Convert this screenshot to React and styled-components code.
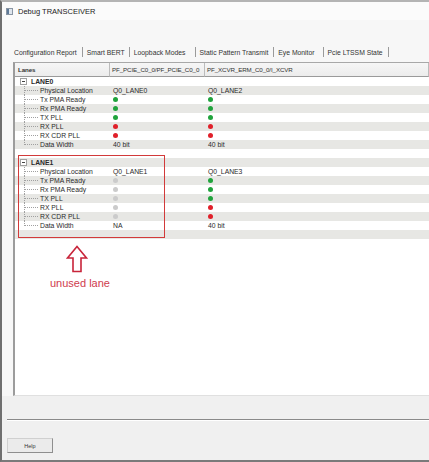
import React from 'react'
import styled, { createGlobalStyle } from 'styled-components'

const GlobalStyle = createGlobalStyle`
  html, body {
    margin: 0;
    padding: 0;
    background: #ffffff;
  }
  body {
    font-family: 'Liberation Sans', Arial, sans-serif;
    color: #222;
  }
`

const Window = styled.div`
  width: 429px;
  height: 462px;
  box-sizing: border-box;
  border-left: 2px solid #6f6f6f;
  border-bottom: 2px solid #7a7a7a;
  border-top: 2px solid #b4b4b4;
  background: #f2f2f2;
  display: flex;
  flex-direction: column;
  overflow: hidden;
`

const TitleBar = styled.div`
  height: 18px;
  flex: none;
  display: flex;
  align-items: center;
  gap: 5px;
  padding-left: 4px;
  background: #fbfbfb;
  font-size: 7.5px;
  color: #222;
`

const Body = styled.div`
  flex: 1;
  display: flex;
  flex-direction: column;
  padding: 26px 0 0 11px;
  background: #f7f7f7;
`

const TabStrip = styled.div`
  height: 12px;
  display: flex;
  align-items: center;
  padding-left: 1px;
  font-size: 6.8px;
  color: #333;
`

const TabItem = styled.span`
  padding: 0 ${({ $pad }) => $pad}px 0 ${({ $first }) => ($first ? 0 : 4)}px;
  white-space: nowrap;
`

const TabSep = styled.span`
  width: 1px;
  height: 10px;
  background: #9a9a9a;
  flex: none;
`

const Panel = styled.div`
  position: relative;
  margin-top: 4px;
  flex: 1;
  background: #ffffff;
  border-top: 1px solid #a8a8a8;
  border-left: 2px solid #9c9c9c;
  border-bottom: 1px solid #e0e0e0;
`

const Grid = styled.div`
  display: grid;
  grid-template-columns: 95px 95px 1fr;
  font-size: 6.8px;
`

const HeadCell = styled.div`
  height: 14px;
  box-sizing: border-box;
  display: flex;
  align-items: center;
  padding-left: ${({ $pad }) => $pad}px;
  background: linear-gradient(#f6f6f6, #ececec);
  border-bottom: 1px solid #9a9a9a;
  border-right: 1px solid #bcbcbc;
  font-size: 6.2px;
  letter-spacing: -0.1px;
  font-weight: ${({ $bold }) => ($bold ? 700 : 400)};
  color: #333;
  white-space: nowrap;
  overflow: hidden;
`

const Cell = styled.div`
  position: relative;
  height: 9px;
  display: flex;
  align-items: center;
  padding-left: ${({ $pad }) => $pad}px;
  background: ${({ $stripe }) => ($stripe ? '#e7e7e4' : '#ffffff')};
  font-weight: ${({ $bold }) => ($bold ? 700 : 400)};
  color: #2a2a2a;
  white-space: nowrap;
`

const TreeLine = styled.span`
  position: absolute;
  left: 9px;
  top: 0;
  width: 10px;
  height: ${({ $last }) => ($last ? 5 : 9)}px;
  border-left: 1px dotted #a0a0a0;
  &::after {
    content: '';
    position: absolute;
    left: 0;
    top: 4px;
    width: 13px;
    border-top: 1px dotted #a0a0a0;
  }
`

const Toggle = styled.span`
  width: 5px;
  height: 5px;
  border: 1px solid #a0a0a0;
  background: #fff;
  margin-right: 4px;
  position: relative;
  flex: none;
  &::after {
    content: '';
    position: absolute;
    left: 1px;
    top: 2px;
    width: 3px;
    height: 1px;
    background: #444;
  }
`

const Dot = styled.span`
  width: 5px;
  height: 5px;
  border-radius: 50%;
  background: ${({ $c }) => $c};
`

const Mark = styled.div`
  position: absolute;
  left: 3px;
  top: 92px;
  width: 147px;
  height: 83px;
  box-sizing: border-box;
  border: 1.5px solid #d23a3a;
`

const Arrow = styled.svg`
  position: absolute;
  left: 51px;
  top: 182px;
`

const Note = styled.div`
  position: absolute;
  left: 35px;
  top: 214px;
  font-size: 11px;
  color: #cf3b4d;
`

const Footer = styled.div`
  height: 64px;
  flex: none;
  display: flex;
  flex-direction: column;
  background: #f0f0f0;
`

const Rule = styled.div`
  margin-top: 23px;
  margin-left: 5px;
  height: 1px;
  background: #8a8a8a;
  border-bottom: 1px solid #ffffff;
`

const HelpButton = styled.button`
  margin: 17px 0 0 5px;
  width: 46px;
  height: 15px;
  padding: 0;
  font-family: 'Liberation Sans', Arial, sans-serif;
  font-size: 5.5px;
  color: #333;
  background: #ebebeb;
  border: 1px solid #d0d0d0;
  border-right-color: #8f8f8f;
  border-bottom-color: #8f8f8f;
`

const GREEN = '#20a33c'
const RED = '#e0202a'
const GRAY = '#cbcbcb'

const lanes = [
  {
    name: 'LANE0',
    rows: [
      ['Physical Location', 'Q0_LANE0', 'Q0_LANE2'],
      ['Tx PMA Ready', GREEN, GREEN],
      ['Rx PMA Ready', GREEN, GREEN],
      ['TX PLL', GREEN, GREEN],
      ['RX PLL', RED, RED],
      ['RX CDR PLL', RED, RED],
      ['Data Width', '40 bit', '40 bit'],
    ],
  },
  {
    name: 'LANE1',
    rows: [
      ['Physical Location', 'Q0_LANE1', 'Q0_LANE3'],
      ['Tx PMA Ready', GRAY, GREEN],
      ['Rx PMA Ready', GRAY, GREEN],
      ['TX PLL', GRAY, GREEN],
      ['RX PLL', GRAY, RED],
      ['RX CDR PLL', GRAY, RED],
      ['Data Width', 'NA', '40 bit'],
    ],
  },
]

const tabs = [
  ['Configuration Report', 5],
  ['Smart BERT', 4],
  ['Loopback Modes', 9],
  ['Static Pattern Transmit', 5],
  ['Eye Monitor', 8],
  ['Pcie LTSSM State', 5],
]

const Value = ({ v }) =>
  v.startsWith('#') ? <Dot $c={v} /> : <span>{v}</span>

const App = () => {
  const cells = []
  let i = 0
  lanes.forEach((lane) => {
    const s = i % 2 === 1
    cells.push(
      <Cell key={`h${i}`} $stripe={s} $pad={5} $bold>
        <Toggle />
        {lane.name}
      </Cell>,
      <Cell key={`h${i}b`} $stripe={s} />,
      <Cell key={`h${i}c`} $stripe={s} />
    )
    i++
    lane.rows.forEach((r, k) => {
      const st = i % 2 === 1
      cells.push(
        <Cell key={`r${i}a`} $stripe={st} $pad={25}>
          <TreeLine $last={k === lane.rows.length - 1} />
          {r[0]}
        </Cell>,
        <Cell key={`r${i}b`} $stripe={st} $pad={3}>
          <Value v={r[1]} />
        </Cell>,
        <Cell key={`r${i}c`} $stripe={st} $pad={3}>
          <Value v={r[2]} />
        </Cell>
      )
      i++
    })
    const sb = i % 2 === 1
    cells.push(
      <Cell key={`e${i}a`} $stripe={sb} />,
      <Cell key={`e${i}b`} $stripe={sb} />,
      <Cell key={`e${i}c`} $stripe={sb} />
    )
    i++
  })

  return (
    <>
      <GlobalStyle />
      <Window>
        <TitleBar>
          <svg width="7" height="7" viewBox="0 0 7 7">
            <rect x="0.5" y="0.5" width="6" height="6" fill="#dfe6ee" stroke="#8a96a4" />
            <rect x="1" y="1" width="2" height="5" fill="#5f7a98" />
          </svg>
          Debug TRANSCEIVER
        </TitleBar>
        <Body>
          <TabStrip>
            {tabs.map(([t, pad], n) => (
              <React.Fragment key={t}>
                <TabItem $first={n === 0} $pad={pad}>{t}</TabItem>
                <TabSep />
              </React.Fragment>
            ))}
          </TabStrip>
          <Panel>
            <Grid>
              <HeadCell $pad={3} $bold>Lanes</HeadCell>
              <HeadCell $pad={2}>PF_PCIE_C0_0/PF_PCIE_C0_0</HeadCell>
              <HeadCell $pad={2}>PF_XCVR_ERM_C0_0/I_XCVR</HeadCell>
              {cells}
            </Grid>
            <Mark />
            <Arrow width="22" height="28" viewBox="0 0 22 28">
              <path
                d="M11 1.5 L20.5 13 L15 13 L15 26.5 L7 26.5 L7 13 L1.5 13 Z"
                fill="none"
                stroke="#c8243a"
                strokeWidth="1.6"
                strokeLinejoin="miter"
              />
            </Arrow>
            <Note>unused lane</Note>
          </Panel>
        </Body>
        <Footer>
          <Rule />
          <HelpButton>Help</HelpButton>
        </Footer>
      </Window>
    </>
  )
}

export default App
